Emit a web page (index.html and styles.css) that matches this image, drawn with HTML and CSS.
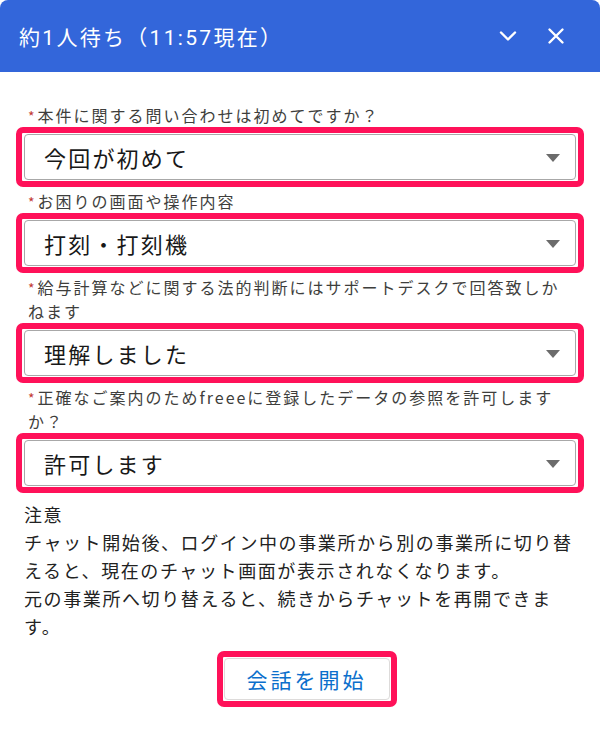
FILE: index.html
```html
<!DOCTYPE html>
<html lang="ja">
<head>
  <meta charset="UTF-8" />
  <meta name="viewport" content="width=device-width, initial-scale=1.0" />
  <title>チャット</title>
  <link rel="stylesheet" href="styles.css">
</head>
<body>

  <div class="chat">
    <header class="chat-header">
      <h1 class="chat-title">約1人待ち（11:57現在）</h1>
      <div class="header-actions">
        <button class="icon-btn" aria-label="最小化">
          <svg width="20" height="20" viewBox="0 0 20 20"><path d="M3 6.5 L10 13.5 L17 6.5" fill="none" stroke="#fff" stroke-width="2.4" stroke-linecap="round" stroke-linejoin="round"/></svg>
        </button>
        <button class="icon-btn" aria-label="閉じる">
          <svg width="20" height="20" viewBox="0 0 20 20"><path d="M3.5 3.5 L16.5 16.5 M16.5 3.5 L3.5 16.5" fill="none" stroke="#fff" stroke-width="2.4" stroke-linecap="round"/></svg>
        </button>
      </div>
    </header>

    <form class="prechat">
      <div class="field">
        <label for="q1"><span class="req">*</span>本件に関する問い合わせは初めてですか？</label>
        <div class="highlight">
          <div class="select-wrap">
            <select id="q1" class="select"><option>今回が初めて</option></select>
          </div>
        </div>
      </div>

      <div class="field">
        <label for="q2"><span class="req">*</span>お困りの画面や操作内容</label>
        <div class="highlight">
          <div class="select-wrap">
            <select id="q2" class="select"><option>打刻・打刻機</option></select>
          </div>
        </div>
      </div>

      <div class="field">
        <label for="q3"><span class="req">*</span>給与計算などに関する法的判断にはサポートデスクで回答致しかねます</label>
        <div class="highlight">
          <div class="select-wrap">
            <select id="q3" class="select"><option>理解しました</option></select>
          </div>
        </div>
      </div>

      <div class="field">
        <label for="q4"><span class="req">*</span>正確なご案内のためfreeeに登録したデータの参照を許可しますか？</label>
        <div class="highlight">
          <div class="select-wrap">
            <select id="q4" class="select"><option>許可します</option></select>
          </div>
        </div>
      </div>

      <div class="notice">
        <p>注意</p>
        <p>チャット開始後、ログイン中の事業所から別の事業所に切り替えると、現在のチャット画面が表示されなくなります。</p>
        <p>元の事業所へ切り替えると、続きからチャットを再開できます。</p>
      </div>

      <div class="actions">
        <div class="highlight highlight-btn">
          <button type="submit" class="start-btn">会話を開始</button>
        </div>
      </div>
    </form>
  </div>

</body>
</html>
```

FILE: styles.css
```css
* {
  margin: 0;
  padding: 0;
  box-sizing: border-box;
}

body {
  background: #ffffff;
  font-family: "Noto Sans CJK JP", Roboto, sans-serif;
  color: #181818;
}

.chat {
  width: 600px;
}

.chat-header {
  height: 72px;
  background: #3366da;
  border-radius: 8px 8px 0 0;
  display: flex;
  align-items: center;
  justify-content: space-between;
  padding: 0 34px 0 19px;
}

.chat-title {
  font-family: Roboto, "Noto Sans CJK JP", sans-serif;
  color: #ffffff;
  font-size: 21px;
  font-weight: 400;
  letter-spacing: 2.3px;
}

.header-actions {
  display: flex;
  gap: 28px;
}

.icon-btn {
  background: none;
  border: none;
  width: 20px;
  height: 20px;
  display: flex;
  cursor: pointer;
}

.prechat {
  padding: 31px 24px 0;
}

.field label {
  display: block;
  font-size: 16px;
  line-height: 24px;
  letter-spacing: 2px;
  color: #3e3e3c;
  padding: 0 8px 0 4px;
}

.req {
  color: #c23934;
  margin-right: 1px;
  font-size: 14px;
  line-height: 14px;
}

.highlight {
  border: 6px solid #ff1159;
  border-radius: 7px;
  padding: 1px 2px;
  margin: 0 -8px 2px;
}

.select-wrap {
  position: relative;
}

.select-wrap::after {
  content: "";
  position: absolute;
  right: 16px;
  top: 20px;
  border-left: 7px solid transparent;
  border-right: 7px solid transparent;
  border-top: 8px solid #6b6b6b;
  pointer-events: none;
}

.select {
  appearance: none;
  -webkit-appearance: none;
  width: 100%;
  height: 46px;
  border: 1px solid #a8a8a8;
  border-radius: 4px;
  background: #ffffff;
  padding: 0 40px 0 19px;
  font-family: inherit;
  font-size: 22px;
  letter-spacing: 2.2px;
  color: #181818;
}

.notice {
  margin-top: 7px;
  font-size: 18px;
  line-height: 28px;
  letter-spacing: 1.6px;
  color: #222222;
}

.actions {
  display: flex;
  justify-content: center;
  margin-top: 11px;
  padding-left: 13px;
}

.highlight-btn {
  margin: 0;
  padding: 1px;
}

.start-btn {
  height: 42px;
  padding: 0 22px;
  background: #ffffff;
  border: 1px solid #dddbda;
  border-radius: 4px;
  font-family: inherit;
  font-size: 21px;
  letter-spacing: 3px;
  color: #0b6fcc;
  cursor: pointer;
}
```
